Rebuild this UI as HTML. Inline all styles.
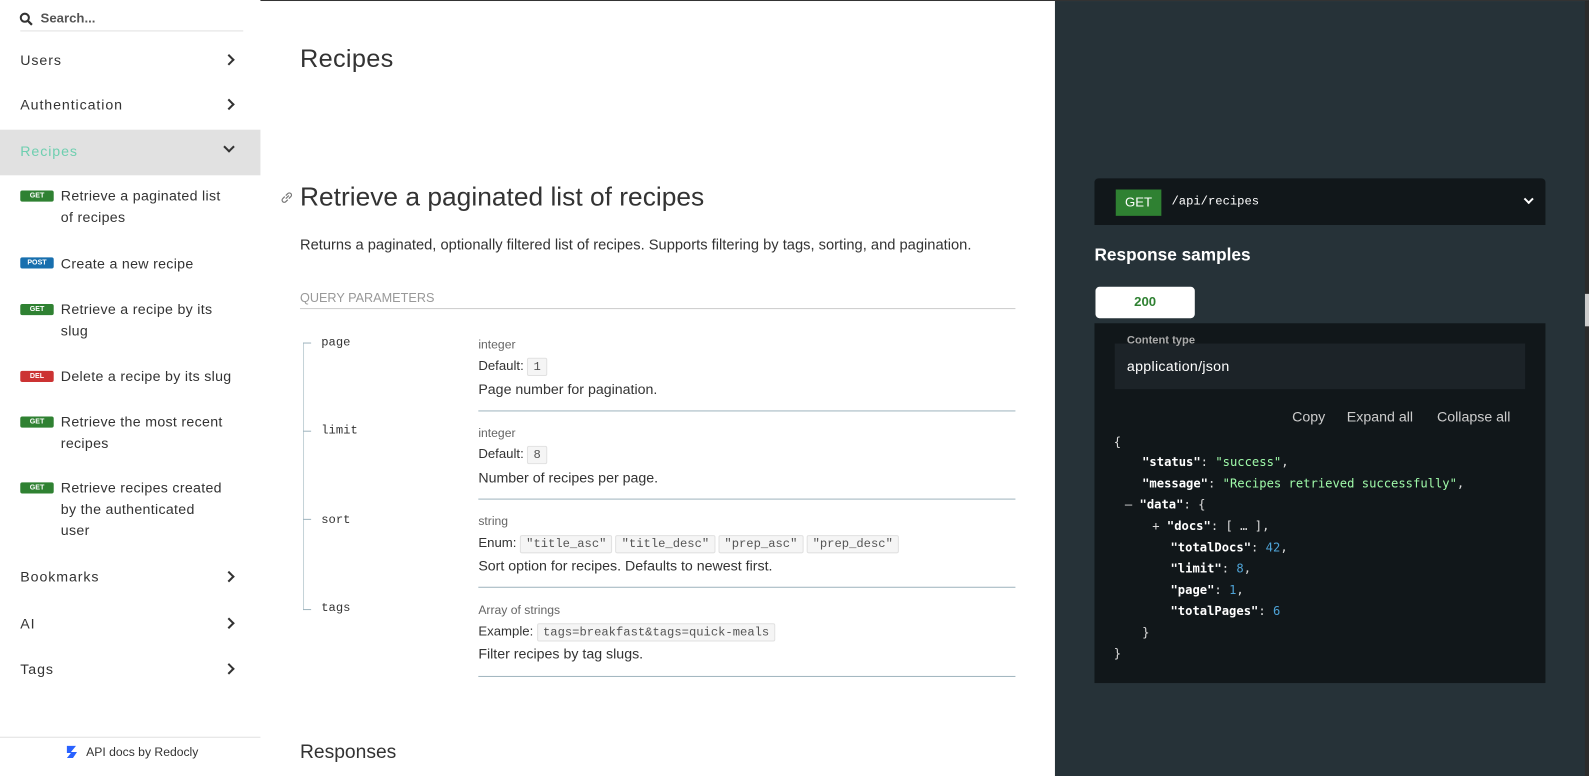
<!DOCTYPE html>
<html><head><meta charset="utf-8"><style>
*{margin:0;padding:0;box-sizing:border-box}
body{width:1589px;height:766px;overflow:hidden;font-family:"Liberation Sans",sans-serif;background:#fff;position:relative;color:#333}
#w{position:absolute;left:0;top:0;width:1568px;height:756px;transform:scale(1.0134);transform-origin:0 0}
.a{position:absolute}
.side{left:0;top:0;width:257px;height:766px;background:#fff}
.nav{left:20px;font-size:14px;color:#333;letter-spacing:0.9px}
.chev{position:absolute;left:222px;width:8px;height:8px;border-right:2px solid #333;border-bottom:2px solid #333;transform:rotate(-45deg)}
.badge{position:absolute;left:20px;width:33px;height:11px;border-radius:2px;color:#fff;font-size:7px;font-weight:bold;text-align:center;line-height:11px}
.item{position:absolute;left:60px;font-size:14px;color:#333;line-height:21px;width:170px;letter-spacing:0.3px}
.mono{font-family:"Liberation Mono",monospace}
.code{display:inline-block;border:1px solid #e1e1e1;background:#f5f5f5;font-family:"Liberation Mono",monospace;font-size:12px;color:#555;padding:0 5px;line-height:16px;margin-right:3px;border-radius:2px}
.pl{position:absolute;left:472px;font-size:13px}
.sep{position:absolute;left:472px;width:530px;height:1px;background:#9fb4be}
.j{position:absolute;font-family:"DejaVu Sans Mono",monospace;font-size:12px;color:#fff;font-weight:bold}
.n{color:#4ea3d6;font-weight:normal}.p{font-weight:normal;color:#ddd}
</style></head><body><div id="w">
<div class="a" style="left:0;top:0;width:1589px;height:1px;background:#333"></div>
<div class="a side">
 <svg class="a" style="left:19px;top:12px" width="14" height="14" viewBox="0 0 14 14"><circle cx="5.5" cy="5.5" r="4" fill="none" stroke="#333" stroke-width="2"/><path d="M8.5 8.5l4 4" stroke="#333" stroke-width="2.2"/></svg>
 <div class="a" style="left:40px;top:10px;font-size:13px;font-weight:bold;color:#555">Search...</div>
 <div class="a" style="left:20px;top:30px;width:220px;height:1px;background:#e1e1e1"></div>
 <div class="a nav" style="top:51px">Users</div><div class="chev" style="top:55px"></div>
 <div class="a nav" style="top:95px">Authentication</div><div class="chev" style="top:99px"></div>
 <div class="a" style="left:0;top:128px;width:257px;height:45px;background:#e1e1e1"></div>
 <div class="a nav" style="top:141px;color:#6fcfb0">Recipes</div><div class="chev" style="top:141px;transform:rotate(45deg)"></div>
 <div class="badge" style="top:188px;background:#2f8132">GET</div><div class="item" style="top:183px">Retrieve a paginated list of recipes</div>
 <div class="badge" style="top:254px;background:#186fae">POST</div><div class="item" style="top:250px">Create a new recipe</div>
 <div class="badge" style="top:300px;background:#2f8132">GET</div><div class="item" style="top:295px">Retrieve a recipe by its slug</div>
 <div class="badge" style="top:366px;background:#cc3333">DEL</div><div class="item" style="top:361px">Delete a recipe by its slug</div>
 <div class="badge" style="top:411px;background:#2f8132">GET</div><div class="item" style="top:406px">Retrieve the most recent recipes</div>
 <div class="badge" style="top:476px;background:#2f8132">GET</div><div class="item" style="top:471px;width:190px">Retrieve recipes created<br>by the authenticated<br>user</div>
 <div class="a nav" style="top:561px">Bookmarks</div><div class="chev" style="top:565px"></div>
 <div class="a nav" style="top:607px">AI</div><div class="chev" style="top:611px"></div>
 <div class="a nav" style="top:652px">Tags</div><div class="chev" style="top:656px"></div>
 <div class="a" style="left:0;top:727px;width:257px;height:1px;background:#e1e1e1"></div>
 <svg class="a" style="left:65px;top:735px" width="12" height="14" viewBox="0 0 12 14"><path d="M1 1h9l-5 6h6l-4 6H1l4-5H1z" fill="#2962ff"/></svg>
 <div class="a" style="left:85px;top:735px;font-size:12px;color:#333">API docs by Redocly</div>
</div>
<div class="a" style="left:296px;top:44px;font-size:25px;color:#333;letter-spacing:0.3px">Recipes</div>
<svg class="a" style="left:276px;top:188px" width="14" height="14" viewBox="0 0 14 14"><path d="M6 8l3-3M5 6l-2 2a2 2 0 003 3l2-2M9 8l2-2a2 2 0 00-3-3L6 5" fill="none" stroke="#777" stroke-width="1.2"/></svg>
<div class="a" style="left:296px;top:179px;font-size:26px;color:#333">Retrieve a paginated list of recipes</div>
<div class="a" style="left:296px;top:234px;font-size:14.5px;color:#333">Returns a paginated, optionally filtered list of recipes. Supports filtering by tags, sorting, and pagination.</div>
<div class="a" style="left:296px;top:287px;font-size:12.5px;color:#999">QUERY PARAMETERS</div>
<div class="a" style="left:296px;top:304px;width:706px;height:1px;background:#ccc"></div>
<div class="a" style="left:299px;top:338px;width:1px;height:264px;background:#c5d3d8"></div>
<div class="a" style="left:299px;top:338px;width:8px;height:1px;background:#9fb4be"></div>
<div class="a" style="left:299px;top:425px;width:8px;height:1px;background:#9fb4be"></div>
<div class="a" style="left:299px;top:512px;width:8px;height:1px;background:#9fb4be"></div>
<div class="a" style="left:299px;top:601px;width:8px;height:1px;background:#9fb4be"></div>
<div class="a mono" style="left:317px;top:331px;font-size:12px">page</div>
<div class="a mono" style="left:317px;top:418px;font-size:12px">limit</div>
<div class="a mono" style="left:317px;top:506px;font-size:12px">sort</div>
<div class="a mono" style="left:317px;top:593px;font-size:12px">tags</div>
<div class="pl" style="top:333px;color:#666;font-size:12px">integer</div>
<div class="pl" style="top:353px">Default: <span class="code">1</span></div>
<div class="pl" style="top:376px;font-size:14px">Page number for pagination.</div>
<div class="sep" style="top:405px"></div>
<div class="pl" style="top:420px;color:#666;font-size:12px">integer</div>
<div class="pl" style="top:440px">Default: <span class="code">8</span></div>
<div class="pl" style="top:463px;font-size:14px">Number of recipes per page.</div>
<div class="sep" style="top:492px"></div>
<div class="pl" style="top:507px;color:#666;font-size:12px">string</div>
<div class="pl" style="top:528px">Enum: <span class="code">"title_asc"</span><span class="code">"title_desc"</span><span class="code">"prep_asc"</span><span class="code">"prep_desc"</span></div>
<div class="pl" style="top:550px;font-size:14px">Sort option for recipes. Defaults to newest first.</div>
<div class="sep" style="top:579px"></div>
<div class="pl" style="top:595px;color:#666;font-size:12px">Array of strings</div>
<div class="pl" style="top:615px">Example: <span class="code">tags=breakfast&amp;tags=quick-meals</span></div>
<div class="pl" style="top:637px;font-size:14px">Filter recipes by tag slugs.</div>
<div class="sep" style="top:667px"></div>
<div class="a" style="left:296px;top:732px;font-size:19px;color:#333">Responses</div>

<div class="a" style="left:1041px;top:1px;width:544px;height:765px;background:#263238"></div>
<div class="a" style="left:1564px;top:1px;width:6px;height:765px;background:#2b2b2b"></div>
<div class="a" style="left:1564px;top:290px;width:4px;height:32px;background:#ccc"></div>
<div class="a" style="left:1080px;top:176px;width:445px;height:46px;background:#11171a;border-radius:4px 4px 0 0"></div>
<div class="a" style="left:1101px;top:187px;width:45px;height:26px;background:#2f8132;color:#fff;font-size:13px;text-align:center;line-height:26px">GET</div>
<div class="a mono" style="left:1156px;top:192px;font-size:12px;color:#fff">/api/recipes</div>
<div class="a" style="left:1505px;top:193px;width:7px;height:7px;border-right:2px solid #fff;border-bottom:2px solid #fff;transform:rotate(45deg)"></div>
<div class="a" style="left:1080px;top:242px;font-size:17px;font-weight:bold;color:#fff">Response samples</div>
<div class="a" style="left:1081px;top:283px;width:98px;height:31px;background:#fff;border-radius:4px;color:#2f8132;font-weight:bold;font-size:13px;text-align:center;line-height:29px">200</div>
<div class="a" style="left:1080px;top:319px;width:445px;height:355px;background:#11171a"></div>
<div class="a" style="left:1100px;top:339px;width:405px;height:45px;background:#1c2328"></div>
<div class="a" style="left:1112px;top:330px;font-size:11px;font-weight:bold;color:#aaa">Content type</div>
<div class="a" style="left:1112px;top:353px;font-size:14px;color:#fff;letter-spacing:0.3px">application/json</div>
<div class="a" style="left:1275px;top:403px;font-size:14px;color:#ccc">Copy</div>
<div class="a" style="left:1329px;top:403px;font-size:14px;color:#ccc">Expand all</div>
<div class="a" style="left:1418px;top:403px;font-size:14px;color:#ccc">Collapse all</div>
<div class="j p" style="left:1099px;top:429px">{</div>
<div class="j" style="left:1127px;top:449px">"status"<span class="p">: </span><span class="p" style="color:#a0fbaa">"success"</span><span class="p">,</span></div>
<div class="j" style="left:1127px;top:470px">"message"<span class="p">: </span><span class="p" style="color:#a0fbaa">"Recipes retrieved successfully"</span><span class="p">,</span></div>
<div class="j" style="left:1110px;top:491px"><span class="p">–</span> "data"<span class="p">: {</span></div>
<div class="j" style="left:1137px;top:512px"><span class="p">+</span> "docs"<span class="p">: [ … ],</span></div>
<div class="j" style="left:1155px;top:533px">"totalDocs"<span class="p">: </span><span class="n">42</span><span class="p">,</span></div>
<div class="j" style="left:1155px;top:554px">"limit"<span class="p">: </span><span class="n">8</span><span class="p">,</span></div>
<div class="j" style="left:1155px;top:575px">"page"<span class="p">: </span><span class="n">1</span><span class="p">,</span></div>
<div class="j" style="left:1155px;top:596px">"totalPages"<span class="p">: </span><span class="n">6</span></div>
<div class="j p" style="left:1127px;top:617px">}</div>
<div class="j p" style="left:1099px;top:638px">}</div>
</div></body></html>
